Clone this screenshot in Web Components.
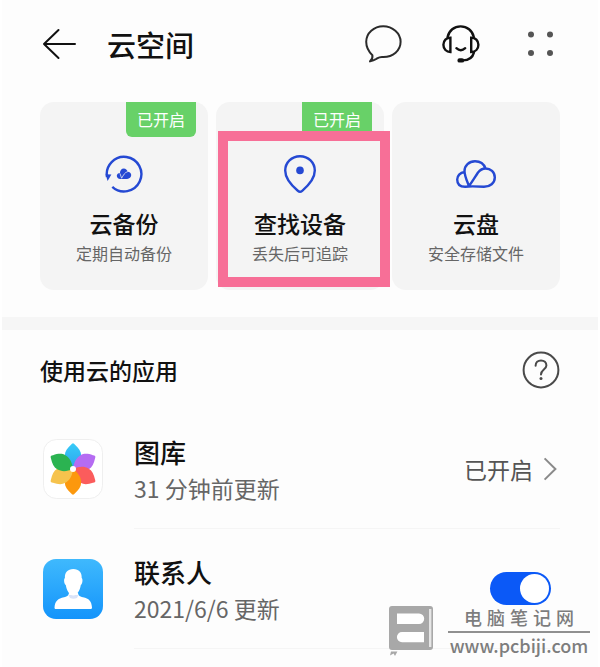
<!DOCTYPE html>
<html lang="zh-CN">
<head>
    <meta charset="UTF-8">
    <meta name="viewport" content="width=device-width, initial-scale=1.0">
    <title>云空间</title>
    <style>
        body {
            margin: 0;
            background: #fff;
            color: #111;
            font-family: "Noto Sans CJK SC", "Noto Sans", sans-serif;
        }
    </style>
</head>
<body>
    <cloud-page>
        <top-bar slot="header">云空间</top-bar>

        <feature-card slot="features" badge="已开启">
            <svg slot="icon" width="38" height="38" viewBox="0 0 38 38" fill="none">
                <path d="M2 22 A17.3 17.3 0 1 1 7.3 31.8" stroke="#2549d3" stroke-width="2.4"/>
                <path d="M.6 19.2 L6.4 19.6 L2.6 26 Z" fill="#2549d3"/>
                <g transform="translate(11.8 13.6) scale(.37)">
                    <path d="M8.5 12 C4 12.5 0 15 0 19.5 C0 24 4 28 9 28 L28 28 C34 28 39 23 39 17.5 C39 12 34.5 8.5 29.5 8.5 C28 4 24 0 19 0 C13 0 8.5 5.5 8.5 12 Z" fill="#2549d3"/>
                    <path d="M8.5 13 L13 26 C18 18 21 10 30 8" stroke="#f4f4f4" stroke-width="2"/>
                </g>
            </svg>
            云备份
            <span slot="note">定期自动备份</span>
        </feature-card>

        <feature-card slot="features" badge="已开启" marked>
            <svg slot="icon" width="32" height="38" viewBox="0 0 32 38" fill="none">
                <path d="M16 1.2 C24.4 1.2 30.8 7.6 30.8 15.6 C30.8 23 24.5 30.5 18.2 35.8 Q16 37.6 13.8 35.8 C7.5 30.5 1.2 23 1.2 15.6 C1.2 7.6 7.6 1.2 16 1.2 Z" stroke="#2549d3" stroke-width="2.4"/>
                <circle cx="16" cy="15.4" r="3.8" fill="#2549d3"/>
            </svg>
            查找设备
            <span slot="note">丢失后可追踪</span>
        </feature-card>

        <feature-card slot="features">
            <svg slot="icon" width="40" height="28" viewBox="0 0 40 28" fill="none">
                <path d="M8.5 12 C4 12.5 1.2 16 1.2 19.5 C1.2 24 4 26.8 9 26.8 C14 26 22 26.4 28 26.8 C34 26.8 38.8 23 38.8 17.5 C38.8 12 34.5 8.5 29.5 8.5 C28 4 24 1.2 19 1.2 C13 1.2 8.5 5.5 8.5 11 C8.5 16 11 21 13 26 C16 22 19 17 22 12.5 C24 10 26.5 8.5 29.5 8.5" stroke="#2549d3" stroke-width="2.4" stroke-linejoin="round"/>
            </svg>
            云盘
            <span slot="note">安全存储文件</span>
        </feature-card>

        <section-title>使用云的应用</section-title>

        <app-row status="已开启">
            <svg slot="icon" width="60" height="60" viewBox="0 0 60 60">
                <defs>
                    <path id="petal" d="M30 4.3 Q31 4.5 32 5.8 C35.5 9 38.2 12.5 38.2 16.5 C38.2 21.5 35.5 26 30 30 C24.5 26 21.8 21.5 21.8 16.5 C21.8 12.5 24.5 9 28 5.8 Q29 4.5 30 4.3 Z"/>
                    <linearGradient id="sky" x1="0" y1="0" x2="0" y2="1">
                        <stop offset="0" stop-color="#37cbf8"/>
                        <stop offset="1" stop-color="#2da4ee"/>
                    </linearGradient>
                </defs>
                <rect x=".5" y=".5" width="59" height="59" rx="13" fill="#fff" stroke="#efefef"/>
                <use href="#petal" fill="url(#sky)"/>
                <use href="#petal" fill="#b56cf2" transform="rotate(60 30 30)"/>
                <use href="#petal" fill="#fb5c5c" transform="rotate(120 30 30)"/>
                <use href="#petal" fill="#fc980d" transform="rotate(180 30 30)"/>
                <use href="#petal" fill="#f6c34d" transform="rotate(240 30 30)"/>
                <use href="#petal" fill="#2bb351" transform="rotate(300 30 30)"/>
                <circle cx="30" cy="30" r="3" fill="#fff"/>
            </svg>
            图库
            <span slot="note">31 分钟前更新</span>
        </app-row>

        <app-row toggle>
            <svg slot="icon" width="60" height="60" viewBox="0 0 60 60">
                <defs>
                    <linearGradient id="blue" x1="0" y1="0" x2="0" y2="1">
                        <stop offset="0" stop-color="#3fb9fd"/>
                        <stop offset="1" stop-color="#1494fb"/>
                    </linearGradient>
                </defs>
                <rect width="60" height="60" rx="13" fill="url(#blue)"/>
                <path d="M11.5 48.5 C12 42 15 39.6 21 38.3 C24.5 37.4 25.5 36.5 26 34 H35 C35.4 36.5 36.5 37.4 40 38.3 C46 39.6 48.5 42 49 48.5 C49 49.6 48.4 50 47.4 50 H13 C12 50 11.5 49.6 11.5 48.5 Z" fill="#fff"/>
                <path d="M25.5 36 H35.5 L34 39 Q30.4 40.5 27 39 Z" fill="#d9e3f8"/>
                <path d="M30.3 10 C36 10 39 13.6 38.7 19 C40 19.5 39.7 25 37.8 26 C37 31.5 34 36.6 30.3 36.6 C26.6 36.6 23.6 31.5 22.8 26 C20.9 25 20.6 19.5 21.9 19 C21.6 13.6 24.6 10 30.3 10 Z" fill="#fff"/>
            </svg>
            联系人
            <span slot="note">2021/6/6 更新</span>
        </app-row>

        <site-mark slot="overlay">电 脑 笔 记 网</site-mark>
    </cloud-page>

    <script>
        class CloudPage extends HTMLElement {
            constructor() {
                super();
                this.attachShadow({ mode: 'open' });
                this.shadowRoot.innerHTML = `
                    <style>
                        :host {
                            display: block;
                            position: relative;
                            box-sizing: border-box;
                            min-height: 100vh;
                            border: solid #fff;
                            border-width: 0 2px;
                            background: #fdfdfd;
                        }

                        .features {
                            display: grid;
                            grid-template-columns: repeat(3, 1fr);
                            gap: 8px;
                            padding: 14px 38px 27px;
                        }

                        .apps {
                            border-top: 13px solid #f6f6f6;
                            padding: 0 38px;
                        }
                    </style>
                    <slot name="header"></slot>
                    <div class="features"><slot name="features"></slot></div>
                    <main class="apps"><slot></slot></main>
                    <slot name="overlay"></slot>
                `;
            }
        }

        class TopBar extends HTMLElement {
            constructor() {
                super();
                this.attachShadow({ mode: 'open' });
                this.shadowRoot.innerHTML = `
                    <style>
                        :host {
                            display: block;
                        }

                        header {
                            display: flex;
                            align-items: center;
                            gap: 40px;
                            height: 88px;
                            padding: 0 44px 0 40px;
                        }

                        h1 {
                            flex: 1;
                            margin: 0 0 0 -10px;
                            font-size: 29px;
                            line-height: 40px;
                            font-weight: 500;
                        }

                        button {
                            display: flex;
                            padding: 0;
                            border: none;
                            background: none;
                            cursor: pointer;
                        }

                        svg {
                            fill: none;
                            stroke: #111;
                            stroke-width: 2;
                        }
                    </style>
                    <header>
                        <button aria-label="返回">
                            <svg width="35" height="32" viewBox="0 0 35 32" stroke-linecap="round" stroke-linejoin="round">
                                <path d="M16.5 2 L2 16 L16.5 30 M2 16 H33"/>
                            </svg>
                        </button>
                        <h1><slot></slot></h1>
                        <button aria-label="消息">
                            <svg width="37" height="38" viewBox="0 0 37 38" stroke-linejoin="round" style="stroke: #2b2b2b">
                                <path d="M5 36.4 Q8 34 7.4 30.2 C3.4 26.4 1.2 21.5 1.2 16.8 C1.2 8 9 1.2 18.2 1.2 S35.6 8 35.6 16.8 S28 32 18.4 32 C14.6 31.4 13.4 32.6 11.4 33.8 Q8.4 35.4 5 36.4 Z"/>
                            </svg>
                        </button>
                        <button aria-label="客服">
                            <svg width="38" height="38" viewBox="0 0 38 38" stroke-linecap="round" style="stroke-width: 2.4">
                                <path d="M5.6 12 C7 5.6 12.2 1.4 18.6 1.4 S30.4 5.6 31.8 12"/>
                                <path d="M8.4 12.6 V27 C4.4 27 1.4 24 1.4 19.8 S4.4 12.6 8.4 12.6 Z M29.2 12.6 V27 C33.4 27 36.4 24 36.4 19.8 S33.4 12.6 29.2 12.6 Z"/>
                                <path d="M14.4 23.2 Q18.8 27.2 23.2 23.2 M32 27.4 C30.6 32.6 26.6 35.4 21 35.4"/>
                                <rect x="16.6" y="34.4" width="4.4" height="2" rx="1"/>
                            </svg>
                        </button>
                        <button aria-label="更多">
                            <svg width="34" height="30" viewBox="0 0 34 30" style="fill: #555; stroke: none">
                                <circle cx="11" cy="5.6" r="3"/>
                                <circle cx="30" cy="5.6" r="3"/>
                                <circle cx="11" cy="24" r="3"/>
                                <circle cx="30" cy="24" r="3"/>
                            </svg>
                        </button>
                    </header>
                `;
            }
        }

        class FeatureCard extends HTMLElement {
            constructor() {
                super();
                this.attachShadow({ mode: 'open' });
            }

            connectedCallback() {
                const badge = this.getAttribute('badge');
                this.shadowRoot.innerHTML = `
                    <style>
                        :host {
                            display: block;
                            position: relative;
                        }

                        /* highlight frame drawn over the card */
                        :host([marked])::after {
                            content: "";
                            position: absolute;
                            inset: 29px -6px 3px 2px;
                            border: 10px solid #f76f97;
                            pointer-events: none;
                        }

                        button {
                            display: flex;
                            flex-direction: column;
                            align-items: center;
                            box-sizing: border-box;
                            width: 100%;
                            height: 188px;
                            padding: 52px 0 0;
                            border: none;
                            border-radius: 14px;
                            background: #f4f4f4;
                            color: inherit;
                            font: inherit;
                            cursor: pointer;
                        }

                        .icon {
                            display: flex;
                            align-items: center;
                            height: 40px;
                        }

                        .name {
                            margin-top: 12px;
                            font-size: 23px;
                            line-height: 34px;
                            font-weight: 500;
                        }

                        .note {
                            font-size: 16px;
                            line-height: 26px;
                            color: #666;
                        }

                        .badge {
                            position: absolute;
                            top: 0;
                            right: 12px;
                            padding: 0 11px;
                            border-radius: 0 0 6px 6px;
                            background: #68d168;
                            color: #fff;
                            font-size: 16px;
                            line-height: 35px;
                        }
                    </style>
                    <button>
                        <span class="icon"><slot name="icon"></slot></span>
                        <span class="name"><slot></slot></span>
                        <span class="note"><slot name="note"></slot></span>
                        ${badge ? `<span class="badge">${badge}</span>` : ''}
                    </button>
                `;
            }
        }

        class SectionTitle extends HTMLElement {
            constructor() {
                super();
                this.attachShadow({ mode: 'open' });
                this.shadowRoot.innerHTML = `
                    <style>
                        :host {
                            display: flex;
                            align-items: center;
                            justify-content: space-between;
                            height: 79px;
                        }

                        h2 {
                            margin: 0;
                            font-size: 23px;
                            line-height: 34px;
                            font-weight: 500;
                        }

                        button {
                            display: flex;
                            padding: 0;
                            border: none;
                            background: none;
                            cursor: pointer;
                        }
                    </style>
                    <h2><slot></slot></h2>
                    <button aria-label="帮助">
                        <svg width="38" height="38" viewBox="0 0 38 38" fill="none" stroke="#4a4a4a" stroke-width="2">
                            <circle cx="19" cy="19" r="17.4"/>
                            <path d="M13.6 14.8 C13.6 11.4 16 9.4 19 9.4 C22.2 9.4 24.4 11.6 24.4 14.4 C24.4 18.4 19 18.8 19 23.4" stroke-linecap="round"/>
                            <circle cx="19" cy="27.4" r="1.5" fill="#4a4a4a" stroke="none"/>
                        </svg>
                    </button>
                `;
            }
        }

        class AppRow extends HTMLElement {
            constructor() {
                super();
                this.attachShadow({ mode: 'open' });
            }

            connectedCallback() {
                this.shadowRoot.innerHTML = `
                    <style>
                        :host {
                            display: flex;
                            gap: 31px;
                            padding-left: 3px;
                            height: 120px;
                        }

                        .icon {
                            display: flex;
                            align-items: center;
                        }

                        .body {
                            flex: 1;
                            display: flex;
                            align-items: center;
                            justify-content: space-between;
                            border-bottom: 1px solid #f5f5f5;
                        }

                        label {
                            display: block;
                            font-size: 26px;
                            line-height: 38px;
                            font-weight: 500;
                        }

                        .note {
                            font-size: 23px;
                            line-height: 34px;
                            color: #666;
                        }

                        button {
                            display: flex;
                            align-items: center;
                            gap: 10px;
                            padding: 0 3px 0 0;
                            border: none;
                            background: none;
                            color: #555;
                            font: inherit;
                            font-size: 23px;
                            line-height: 34px;
                            cursor: pointer;
                        }

                        input {
                            appearance: none;
                            display: flex;
                            box-sizing: border-box;
                            width: 61px;
                            height: 33px;
                            margin: 0 9px 0 0;
                            padding: 2px;
                            border-radius: 17px;
                            background: #bbb;
                            cursor: pointer;
                        }

                        input::before {
                            content: "";
                            width: 29px;
                            border-radius: 50%;
                            background: #fff;
                        }

                        input:checked {
                            justify-content: flex-end;
                            background: #0b59f7;
                        }
                    </style>
                    <span class="icon"><slot name="icon"></slot></span>
                    <div class="body">
                        <div>
                            <label for="control"><slot></slot></label>
                            <div class="note"><slot name="note"></slot></div>
                        </div>
                        ${this.hasAttribute('toggle') ? this.toggle() : this.link()}
                    </div>
                `;
            }

            toggle() {
                return `<input id="control" type="checkbox" role="switch" checked>`;
            }

            link() {
                return `
                    <button id="control">
                        ${this.getAttribute('status')}
                        <svg width="14" height="24" viewBox="0 0 14 24" fill="none" stroke="#8a8a8a" stroke-width="2">
                            <path d="M1.6 1.4 L12.4 12 L1.6 22.6"/>
                        </svg>
                    </button>
                `;
            }
        }

        class SiteMark extends HTMLElement {
            constructor() {
                super();
                this.attachShadow({ mode: 'open' });
                this.shadowRoot.innerHTML = `
                    <style>
                        :host {
                            position: absolute;
                            right: 8px;
                            bottom: 10px;
                            display: flex;
                            align-items: flex-end;
                            gap: 15px;
                            color: #7d7d7d;
                            text-align: center;
                        }

                        .name {
                            padding: 0 16px;
                            border-bottom: 2px solid #909090;
                            font: 500 18px/24px "Liberation Sans", "Noto Sans CJK SC", sans-serif;
                        }

                        a {
                            display: block;
                            color: inherit;
                            font: 500 18px/24px "Noto Sans CJK SC", sans-serif;
                            text-decoration: none;
                        }
                    </style>
                    <svg width="44" height="51" viewBox="0 0 44 51">
                        <rect width="44" height="44" rx="3" fill="#a8a8a8"/>
                        <path d="M8 7.6 H30 A5 5 0 0 1 30 18 H8 Z M35 26 H13 A5 5 0 0 0 13 36.2 H35 Z" fill="#fff"/>
                        <path d="M40 3 H42.4 V41 H40 Z" fill="#e6e6e6"/>
                        <path d="M2 45.4 H8.4 L6 50 L4.6 47.6 L1 49.4 Z" fill="#a8a8a8"/>
                    </svg>
                    <div>
                        <div class="name"><slot></slot></div>
                        <a href="http://www.pcbiji.com">www.pcbiji.com</a>
                    </div>
                `;
            }
        }

        customElements.define('cloud-page', CloudPage);
        customElements.define('top-bar', TopBar);
        customElements.define('feature-card', FeatureCard);
        customElements.define('section-title', SectionTitle);
        customElements.define('app-row', AppRow);
        customElements.define('site-mark', SiteMark);
    </script>
</body>
</html>
